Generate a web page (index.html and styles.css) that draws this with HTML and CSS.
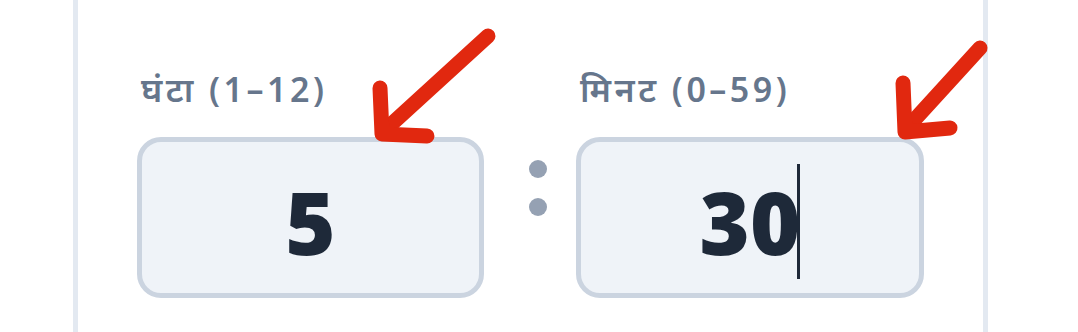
FILE: index.html
```html
<!DOCTYPE html>
<html>

<head>
    <meta name="viewport" content="width=device-width, initial-scale=1">
    <link rel="stylesheet" href="styles.css">
    <title>Time Picker</title>
</head>

<body>
    <div id="screen">
        <div class="panel">
            <div class="time-grid">
                <label class="field-label">घंटा (1–12)</label>
                <span></span>
                <label class="field-label">मिनट (0–59)</label>

                <div class="time-box">5</div>
                <div class="colon">
                    <span class="dot"></span>
                    <span class="dot"></span>
                </div>
                <div class="time-box">30<span class="caret"></span></div>
            </div>
        </div>

        <!-- red pointer arrows drawn over the form -->
        <svg class="arrows" viewBox="0 0 1078 332" width="1078" height="332">
            <g fill="none" stroke="#e1280f" stroke-width="15" stroke-linecap="round" stroke-linejoin="round">
                <path d="M488 36 L385 130" />
                <path d="M380 88 L382 134 L427 136" />
                <path d="M980 48 L907 128" />
                <path d="M903 83 L905 132 L950 128" />
            </g>
        </svg>
    </div>
</body>

</html>
```

FILE: styles.css
```css
html, body {
    margin: 0;
    background: #ffffff;
}

body {
    font-family: "Noto Sans", "Open Sans", sans-serif;
}

#screen {
    position: relative;
    width: 1078px;
    height: 332px;
    overflow: hidden;
}

.panel {
    box-sizing: border-box;
    margin-left: 73px;
    width: 915px;
    height: 332px;
    border-left: 5px solid #e3e9f1;
    border-right: 5px solid #e3e9f1;
    padding-top: 67px;
    padding-left: 59px;
}

.time-grid {
    display: grid;
    grid-template-columns: 347px 92px 348px;
    row-gap: 26px;
}

.field-label {
    display: block;
    font-size: 34px;
    line-height: 44px;
    font-weight: 600;
    color: #66768c;
    letter-spacing: 3.5px;
    padding-left: 4px;
    white-space: nowrap;
}

.time-box {
    box-sizing: border-box;
    height: 161px;
    border: 5px solid #cbd4e0;
    border-radius: 24px;
    background: #eff3f8;
    display: flex;
    align-items: center;
    justify-content: center;
    font-family: "Open Sans", "Noto Sans", sans-serif;
    font-size: 86px;
    font-weight: 800;
    color: #1e2939;
    padding-top: 8px;
}

.caret {
    display: inline-block;
    width: 3px;
    height: 115px;
    margin-left: -3px;
    background: #1e2939;
}

.colon {
    display: flex;
    flex-direction: column;
    gap: 20px;
    padding-top: 23px;
    padding-left: 45px;
}

.dot {
    width: 18px;
    height: 18px;
    border-radius: 50%;
    background: #95a1b3;
}

.arrows {
    position: absolute;
    left: 0;
    top: 0;
}
```
